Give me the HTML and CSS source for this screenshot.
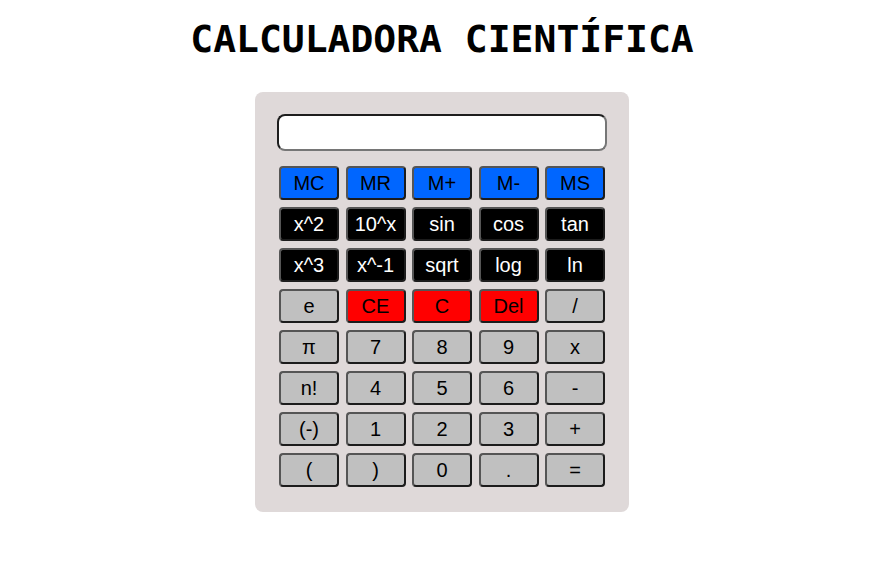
FILE: index.html
```html
<!DOCTYPE html>
<html lang="es">
<head>
<meta charset="utf-8">
<title>Calculadora Científica</title>
<link rel="stylesheet" href="styles.css">
</head>
<body>
<div class="page">
  <h1 class="title">CALCULADORA CIENTÍFICA</h1>
  <div class="calc">
    <input class="display" type="text">
    <div class="keys">
      <button class="key mem">MC</button>
      <button class="key mem">MR</button>
      <button class="key mem">M+</button>
      <button class="key mem">M-</button>
      <button class="key mem">MS</button>
      <button class="key fn">x^2</button>
      <button class="key fn">10^x</button>
      <button class="key fn">sin</button>
      <button class="key fn">cos</button>
      <button class="key fn">tan</button>
      <button class="key fn">x^3</button>
      <button class="key fn">x^-1</button>
      <button class="key fn">sqrt</button>
      <button class="key fn">log</button>
      <button class="key fn">ln</button>
      <button class="key">e</button>
      <button class="key clr">CE</button>
      <button class="key clr">C</button>
      <button class="key clr">Del</button>
      <button class="key">/</button>
      <button class="key">π</button>
      <button class="key">7</button>
      <button class="key">8</button>
      <button class="key">9</button>
      <button class="key">x</button>
      <button class="key">n!</button>
      <button class="key">4</button>
      <button class="key">5</button>
      <button class="key">6</button>
      <button class="key">-</button>
      <button class="key">(-)</button>
      <button class="key">1</button>
      <button class="key">2</button>
      <button class="key">3</button>
      <button class="key">+</button>
      <button class="key">(</button>
      <button class="key">)</button>
      <button class="key">0</button>
      <button class="key">.</button>
      <button class="key">=</button>
    </div>
  </div>
</div>
</body>
</html>
```
FILE: styles.css
```css
html, body {
  margin: 0;
  padding: 0;
  background: #ffffff;
}
.page {
  width: 884px;
  padding-top: 17px;
  display: flex;
  flex-direction: column;
  align-items: center;
}
.title {
  margin: 0 0 31px 0;
  font-family: "DejaVu Sans Mono", monospace;
  font-weight: bold;
  font-size: 38px;
  line-height: 44px;
  color: #000;
}
.calc {
  box-sizing: border-box;
  width: 374px;
  height: 420px;
  padding: 22px;
  background: #dfd9d9;
  border-radius: 8px;
  display: flex;
  flex-direction: column;
}
.display {
  box-sizing: border-box;
  width: 330px;
  height: 37px;
  margin: 0;
  padding: 0 8px;
  background: #fff;
  border: 2px solid;
  border-color: #1e1e1e #767676 #767676 #1e1e1e;
  border-radius: 8px;
  font-family: "Liberation Sans", Arial, sans-serif;
  font-size: 20px;
}
.keys {
  margin-top: 15px;
  padding: 0 2px;
  display: grid;
  grid-template-columns: repeat(5, 60px);
  grid-auto-rows: 34px;
  column-gap: 6.5px;
  row-gap: 7px;
}
.key {
  box-sizing: border-box;
  margin: 0;
  padding: 0;
  border: 2px solid;
  border-color: #555555 #1c1c1c #1c1c1c #555555;
  border-radius: 4px;
  background: #c0c0c0;
  color: #000;
  font-family: "Liberation Sans", Arial, sans-serif;
  font-size: 20px;
  line-height: 1;
}
.mem {
  background: #0066ff;
  color: #000;
}
.fn {
  background: #000;
  color: #fff;
}
.clr {
  background: #ff0000;
  color: #000;
}
```
